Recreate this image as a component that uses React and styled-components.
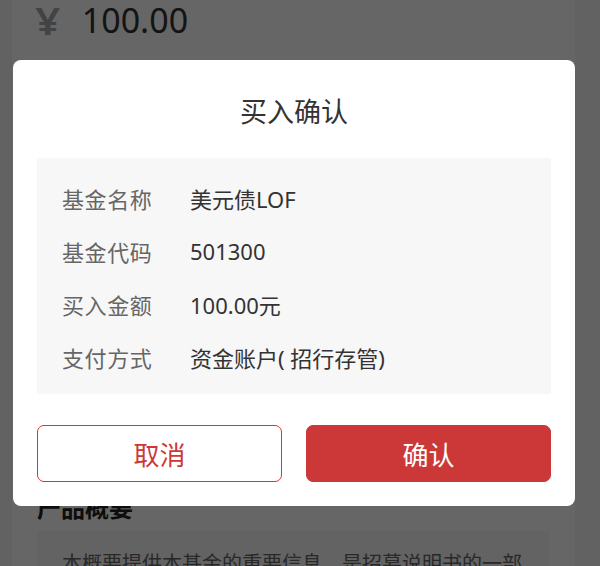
import styled, { createGlobalStyle } from "styled-components";

const GlobalStyle = createGlobalStyle`
  html, body {
    margin: 0;
    padding: 0;
    background: #f4f4f4;
    font-family: "Noto Sans", "Noto Sans CJK SC", sans-serif;
    overflow: hidden;
  }
`;

const Page = styled.div`
  height: 566px;
  overflow: hidden;
`;

const Card = styled.div`
  margin: 0 25px 0 12px;
  background: #fff;
  min-height: 600px;
`;

const AmountRow = styled.div`
  display: flex;
  align-items: center;
  height: 40px;
  padding-left: 25px;
  gap: 23px;
`;

const Yen = styled.span`
  font-size: 38px;
  font-weight: 600;
  color: #a8a8a8;
  line-height: 1;
  transform: scaleX(1.15);
`;

const Amount = styled.span`
  font-size: 34px;
  color: #333;
  line-height: 1;
`;

const SectionTitle = styled.h3`
  margin: 455px 0 0;
  padding-left: 25px;
  font-size: 24px;
  font-weight: 700;
  color: #222;
  line-height: 26px;
`;

const Summary = styled.div`
  margin: 10px 25px 0;
  padding: 18px 25px;
  background: #f7f7f7;
  font-size: 20px;
  line-height: 30px;
  color: #666;
`;

const Overlay = styled.div`
  position: fixed;
  inset: 0;
  background: rgba(0, 0, 0, 0.6);
  display: flex;
  align-items: center;
  padding: 0 25px 0 13px;
`;

const Modal = styled.div`
  width: 100%;
  background: #fff;
  border-radius: 8px;
  padding: 0 24px 24px;
  box-sizing: border-box;
`;

const Title = styled.div`
  padding-top: 35px;
  margin-bottom: 29px;
  line-height: 34px;
  font-size: 27px;
  text-align: center;
  color: #333;
`;

const InfoBox = styled.div`
  background: #f7f7f7;
  padding: 13px 0 11px 25px;
`;

const Row = styled.div`
  display: flex;
  align-items: center;
  height: 53px;
  font-size: 22px;
`;

const Label = styled.span`
  width: 128px;
  flex-shrink: 0;
  color: #666;
  letter-spacing: 0.6px;
`;

const Value = styled.span`
  color: #333;
`;

const Actions = styled.div`
  display: grid;
  grid-template-columns: 1fr 1fr;
  gap: 24px;
  margin-top: 31px;
`;

const Button = styled.button`
  height: 57px;
  border-radius: 7px;
  border: 1px solid #cc3838;
  background: ${(p) => (p.$primary ? "#cc3838" : "#fff")};
  color: ${(p) => (p.$primary ? "#fff" : "#cc3838")};
  font-family: inherit;
  font-size: 26px;
  padding: 0;
  cursor: pointer;
`;

const rows = [
  ["基金名称", "美元债LOF"],
  ["基金代码", "501300"],
  ["买入金额", "100.00元"],
  ["支付方式", "资金账户( 招行存管)"],
];

export default function App() {
  return (
    <>
      <GlobalStyle />
      <Page>
        <Card>
          <AmountRow>
            <Yen>¥</Yen>
            <Amount>100.00</Amount>
          </AmountRow>
          <SectionTitle>产品概要</SectionTitle>
          <Summary>
            本概要提供本基金的重要信息，是招募说明书的一部分，投资者在作出投资决策前，请阅读完整的招募说明书等销售文件。
          </Summary>
        </Card>
      </Page>
      <Overlay>
        <Modal>
          <Title>买入确认</Title>
          <InfoBox>
            {rows.map(([label, value]) => (
              <Row key={label}>
                <Label>{label}</Label>
                <Value>{value}</Value>
              </Row>
            ))}
          </InfoBox>
          <Actions>
            <Button>取消</Button>
            <Button $primary>确认</Button>
          </Actions>
        </Modal>
      </Overlay>
    </>
  );
}
